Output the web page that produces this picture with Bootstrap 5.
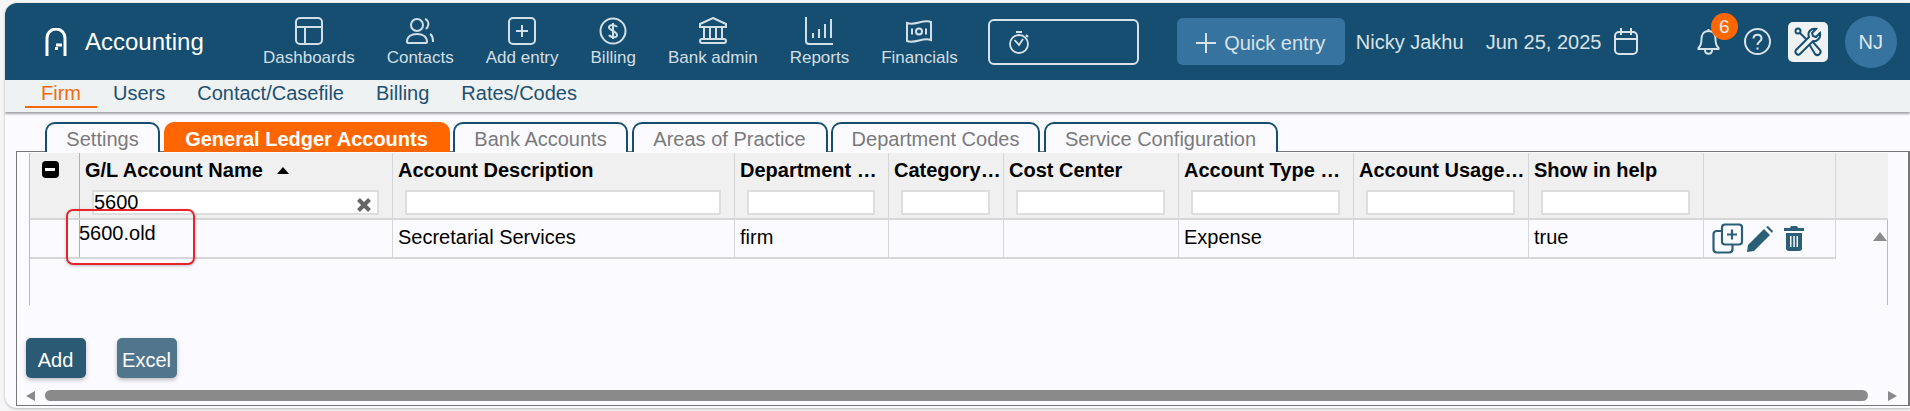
<!DOCTYPE html>
<html lang="en">
<head>
  <meta charset="UTF-8">
  <title>Accounting</title>
  <link href="https://cdn.jsdelivr.net/npm/bootstrap@5.3.2/dist/css/bootstrap.min.css" rel="stylesheet">
  <style>
    html, body { height: 411px; overflow: hidden; }
    body { background: #f6f6f6; font-family: "Liberation Sans", Arial, sans-serif; color: #000; }
    .app-shell { margin: 3px 0 0 5px; height: 405px; background: #fbfbff; border-radius: 12px 0 0 12px; box-shadow: 0 1px 3px rgba(0,0,0,.25); overflow: hidden; position: relative; }

    /* top bar */
    .top-bar { height: 77px; background: #154e70; color: #d8e2e8; }
    .brand-box { width: 222px; padding-left: 40px; gap: 18px; color: #fff; font-size: 24px; }
    .main-menu { gap: 32px; margin-left: 36px; }
    .menu-item { color: #d3dfe6; font-size: 17px; line-height: 18px; text-decoration: none; text-align: center; white-space: nowrap; }
    .menu-item svg { display: block; margin: 0 auto 4px; width: 30px; height: 28px; }
    .timer-box { width: 151px; height: 46px; margin-left: 30px; border: 2px solid #d8e2e8; border-radius: 6px; padding-left: 18px; }
    .quick-btn { width: 168px; height: 47px; margin-left: 38px; background: #37739f; border: 0; border-radius: 6px; color: #d8e2e8; font-size: 20px; padding: 3px 0 0; }
    .quick-btn:hover { background: #37739f; color: #d8e2e8; }
    .user-name { margin-left: 11px; font-size: 20px; width: 130px; }
    .date-text { font-size: 20px; width: 128px; }
    .bell-box { margin-left: 59px; width: 47px; position: relative; }
    .bell-count { position: absolute; left: 14px; top: -15px; width: 27px; height: 27px; border-radius: 50%; background: #ff6600; color: #e8eef2; font-size: 19px; line-height: 27px; text-align: center; }
    .tools-box { width: 40px; height: 40px; margin-left: 17px; background: #eef2f2; border-radius: 5px; }
    .avatar-box { width: 52px; height: 52px; margin-left: 17px; border-radius: 50%; background: #37739f; color: #dfe8ed; font-size: 20px; }

    /* second bar */
    .sub-bar { height: 32px; background: #eef2f2; box-shadow: 0 2px 2px rgba(0,0,0,.35); padding-left: 20px; position: relative; }
    .sub-link { color: #1e5070; font-size: 20px; line-height: 27px; padding: 0 16px; height: 28px; text-decoration: none; white-space: nowrap; }
    .sub-link.is-on { color: #f26a0f; border-bottom: 2px solid #f26a0f; }

    /* tabs */
    .tab-strip { gap: 3.5px; padding: 10px 0 0 40px; height: 39px; position: relative; z-index: 1; }
    .ledger-tab { height: 30px; border: 2px solid #154e70; border-bottom: 0; border-radius: 10px 10px 0 0; background: #fbfbff; color: #7a7a7a; font-size: 20px; line-height: 30px; text-align: center; white-space: nowrap; }
    .ledger-tab.is-on { background: #ff6600; border-color: #ff6600; color: #fff; font-weight: 700; }

    /* grid */
    .grid-frame { margin-left: 10.5px; height: 255px; border: 1px solid #777; border-right-width: 2px; padding: 1px 0 0 12px; }
    .grid-box { width: 1859px; height: 152px; border-left: 1px solid #bbb; border-right: 1px solid #bbb; }
    .ledger-grid { table-layout: fixed; width: 1858px; border-collapse: collapse; font-size: 20px; }
    .ledger-grid th { height: 66px; background: #f0f0f0; border-right: 1px solid #d6d6d6; border-bottom: 2px solid #d6d6d6; padding: 6px 2px 0 5px; vertical-align: top; font-size: 20px; line-height: 22px; white-space: nowrap; overflow: hidden; }
    .ledger-grid td { height: 39px; border-right: 1px solid #d6d6d6; border-bottom: 2px solid #d6d6d6; padding: 0 5px 4px; vertical-align: middle; white-space: nowrap; }
    .ledger-grid th.first-col { border-right-color: #b0b0b0; padding: 0 0 0 12px; }
    .ledger-grid td.first-col { border-right-color: #b0b0b0; padding: 0; }
    .ledger-grid td.name-col { padding: 0 0 4px; }
    .ledger-grid td.tools-col { padding: 0 5px; }
    .ledger-grid .filler-col { border-right: 0; border-bottom: 0; position: relative; padding: 0; }
    .ledger-grid th.filler-col { border-bottom: 2px solid #d6d6d6; }
    .name-cell { position: relative; top: -4px; left: -1px; }
    .filter-input { display: block; height: 25px; margin: 9px 0 0 7px; width: calc(100% - 18px); border: 2px solid #dedede; background: #fff; padding: 0; font-size: 20px; font-weight: 400; line-height: 21px; position: relative; }
    .filter-clear { position: absolute; right: 6px; top: 4px; line-height: 14px; }
    .sort-mark { margin-left: 14px; display: inline-block; border: 6px solid transparent; border-top: 0; border-bottom: 7px solid #000; vertical-align: 3px; }
    .minus-mark { display: inline-flex; width: 17px; height: 17px; background: #000; border-radius: 4px; align-items: center; justify-content: center; margin-top: 3px; }
    .minus-mark i { display: block; width: 10px; height: 3px; background: #fff; }
    .row-tools { gap: 3px; color: #2b5f78; padding-left: 3px; }
    .scroll-up { position: absolute; right: 1px; top: 12px; border: 7px solid transparent; border-top: 0; border-bottom: 9px solid #8a8a8a; }

    /* red note over the first row */
    .red-note { position: absolute; left: 61px; top: 206px; width: 129px; height: 56px; border: 2px solid #e8232a; border-radius: 7px; box-shadow: 0 1px 3px rgba(0,0,0,.25); pointer-events: none; }

    /* bottom */
    .action-row { gap: 31px; margin: 33px 0 0 -3px; }
    .grid-btn { width: 60px; height: 40px; padding: 3px 0 0; border: 0; border-radius: 5px; background: #2b5a74; color: #fff; font-size: 20px; box-shadow: 0 2px 4px rgba(0,0,0,.25); }
    .grid-btn.is-soft { background: #50758d; }
    .h-scroll { height: 11px; margin: 12px 0 0 -3px; gap: 10px; }
    .arrow-left { border: 5.5px solid transparent; border-left: 0; border-right: 9px solid #8a8a8a; }
    .arrow-right { border: 5.5px solid transparent; border-right: 0; border-left: 9px solid #8a8a8a; }
    .h-thumb { width: 1823px; height: 11px; background: #8a8a8a; border-radius: 6px; }
  </style>
</head>
<body>
  <div class="app-shell">
    <div class="top-bar d-flex align-items-center">
      <div class="brand-box d-flex align-items-center">
        <svg width="22" height="28" viewBox="0 0 22 28" fill="none" stroke="#fff" stroke-width="3"><path d="M2 28V10a9 9 0 0 1 18 0v18"/><path d="M11 17h6M11.500 19v3"/></svg>
        <span>Accounting</span>
      </div>
      <div class="main-menu d-flex">
        <a class="menu-item" href="#">
          <svg viewBox="0 0 30 28" fill="none" stroke="#d3dfe6" stroke-width="2"><rect x="2" y="1" width="26" height="26" rx="4"/><path d="M2 10h26M11 10v17"/></svg>Dashboards</a>
        <a class="menu-item" href="#">
          <svg viewBox="0 0 30 28" fill="none" stroke="#d3dfe6" stroke-width="2"><circle cx="12" cy="8" r="6"/><path d="M2 25c0-5 4-8 10-8s10 3 10 8c0 1-1 1-2 1H4c-1 0-2 0-2-1z"/><path d="M20 2c3 1 4 4 3 7-.4 1.200-1 2-2 3M25 17c2 1 3 4 3 8"/></svg>Contacts</a>
        <a class="menu-item" href="#">
          <svg viewBox="0 0 30 28" fill="none" stroke="#d3dfe6" stroke-width="2"><rect x="2" y="1" width="26" height="26" rx="4"/><path d="M15 8v12M9 14h12"/></svg>Add entry</a>
        <a class="menu-item" href="#">
          <svg viewBox="0 0 30 28" fill="none" stroke="#d3dfe6" stroke-width="2"><circle cx="15" cy="14" r="12.500"/><path d="M19 10c-1-2-7-3-8 0s8 4 8 8-7 2-8 0M15 6v16"/></svg>Billing</a>
        <a class="menu-item" href="#">
          <svg viewBox="0 0 30 28" fill="none" stroke="#d3dfe6" stroke-width="2"><path d="M15 1l13 6v3H2V7z"/><path d="M6 10v12M12 10v12M18 10v12M24 10v12"/><rect x="2" y="22" width="26" height="4" rx="2"/></svg>Bank admin</a>
        <a class="menu-item" href="#">
          <svg viewBox="0 0 30 28" fill="none" stroke="#d3dfe6" stroke-width="2"><path d="M2 0v24c0 2 1 3 3 3h24"/><path d="M9 21v-5M15 21v-9M21 21V7M27 21V2"/></svg>Reports</a>
        <a class="menu-item" href="#">
          <svg viewBox="0 0 30 28" fill="none" stroke="#d3dfe6" stroke-width="2"><path d="M3 6c8 3 16-4 24-1v18c-8-3-16 4-24 1z"/><circle cx="15" cy="14.500" r="3"/><path d="M8 11.500v6M22 11.500v6"/></svg>Financials</a>
      </div>
      <div class="timer-box d-flex align-items-center">
        <svg width="22" height="24" viewBox="0 0 22 24" fill="none" stroke="#d8e2e8" stroke-width="1.800"><circle cx="11" cy="14" r="9"/><path d="M8 2h6M18 5l2 2M6.500 10l4.500 5 4-6"/></svg>
      </div>
      <button class="quick-btn btn d-flex align-items-center justify-content-center gap-2" type="button">
        <svg width="20" height="20" viewBox="0 0 20 20" stroke="#d8e2e8" stroke-width="2"><path d="M10 0v20M0 10h20"/></svg>Quick entry</button>
      <div class="user-name">Nicky Jakhu</div>
      <div class="date-text">Jun 25, 2025</div>
      <svg width="24" height="27" viewBox="0 0 24 27" fill="none" stroke="#d8e2e8" stroke-width="2"><rect x="1" y="4" width="22" height="22" rx="4"/><path d="M1 11h22M7 0v7M17 0v7"/></svg>
      <div class="bell-box d-flex">
        <svg width="23" height="27" viewBox="0 0 23 27" fill="none" stroke="#d8e2e8" stroke-width="2"><path d="M11.500 3c-5 0-7 4-7 8 0 5-1 7-3 9v1h20v-1c-2-2-3-4-3-9 0-4-2-8-7-8zM11.500 1v2M8 22c0 5 7 5 7 0"/></svg>
        <span class="bell-count">6</span>
      </div>
      <svg width="27" height="27" viewBox="0 0 27 27" fill="none" stroke="#d8e2e8" stroke-width="2"><circle cx="13.500" cy="13.500" r="12.500"/><path d="M9.500 10.500c0-5 8-5 8 0 0 3-4 3-4 6.500M13.500 19.500v2"/></svg>
      <div class="tools-box d-flex align-items-center justify-content-center">
        <svg width="28" height="30" viewBox="0 0 28 30" fill="none" stroke="#154e70" stroke-width="2"><circle cx="4" cy="4" r="2.500"/><path d="M6 6l8 8"/><path d="M15 17l3-3 8 9c2 3-2 7-5 4z"/><path d="M26 6l-4 4-3-1-1-3 4-4c-5-1-9 3-7 8L2 23c-2 3 2 6 4 4l13-13c4 1 8-3 7-8z" fill="#eef2f2"/></svg>
      </div>
      <div class="avatar-box d-flex align-items-center justify-content-center">NJ</div>
    </div>

    <div class="sub-bar d-flex">
      <a class="sub-link is-on" href="#">Firm</a>
      <a class="sub-link" href="#">Users</a>
      <a class="sub-link" href="#">Contact/Casefile</a>
      <a class="sub-link" href="#">Billing</a>
      <a class="sub-link" href="#">Rates/Codes</a>
    </div>

    <div class="tab-strip d-flex">
      <div class="ledger-tab" style="width:115px">Settings</div>
      <div class="ledger-tab is-on" style="width:286px">General Ledger Accounts</div>
      <div class="ledger-tab" style="width:175px">Bank Accounts</div>
      <div class="ledger-tab" style="width:196px">Areas of Practice</div>
      <div class="ledger-tab" style="width:209px">Department Codes</div>
      <div class="ledger-tab" style="width:234px">Service Configuration</div>
    </div>

    <div class="grid-frame">
      <div class="grid-box">
        <table class="ledger-grid">
          <colgroup>
            <col style="width:50px"><col style="width:313px"><col style="width:342px"><col style="width:154px"><col style="width:115px"><col style="width:175px"><col style="width:175px"><col style="width:175px"><col style="width:175px"><col style="width:132px"><col>
          </colgroup>
          <thead>
            <tr>
              <th class="first-col"><span class="minus-mark"><i></i></span></th>
              <th>G/L Account Name<span class="sort-mark"></span>
                <div class="filter-input">5600<span class="filter-clear"><svg width="14" height="14" viewBox="0 0 14 14" stroke="#666" stroke-width="4"><path d="M1.500 1.500l11 11M12.500 1.500l-11 11"/></svg></span></div></th>
              <th>Account Description<div class="filter-input"></div></th>
              <th>Department …<div class="filter-input"></div></th>
              <th>Category…<div class="filter-input"></div></th>
              <th>Cost Center<div class="filter-input"></div></th>
              <th>Account Type …<div class="filter-input"></div></th>
              <th>Account Usage…<div class="filter-input"></div></th>
              <th>Show in help<div class="filter-input"></div></th>
              <th></th>
              <th class="filler-col"></th>
            </tr>
          </thead>
          <tbody>
            <tr>
              <td class="first-col"></td>
              <td class="name-col"><span class="name-cell">5600.old</span></td>
              <td>Secretarial Services</td>
              <td>firm</td>
              <td></td>
              <td></td>
              <td>Expense</td>
              <td></td>
              <td>true</td>
              <td class="tools-col">
                <div class="row-tools d-flex align-items-center">
                  <svg width="32" height="31" viewBox="0 0 32 31" fill="none" stroke="#2b5f78" stroke-width="2.200"><rect x="10" y="1.500" width="20" height="20" rx="3"/><path d="M20 6.500v10M15 11.500h10"/><path d="M10 8H5c-2 0-3.500 1.500-3.500 3.500V26c0 2 1.500 3.500 3.500 3.500h12c2 0 3.500-1.500 3.500-3.500v-4.500"/></svg>
                  <svg width="26" height="26" viewBox="0 0 26 26" fill="#2b5f78"><path d="M0 26l1-7L17 3l6 6L7 25zM19 1l2-1 5 5-1 2z"/></svg>
                  <svg width="20" height="25" viewBox="0 0 20 25" style="margin-left:8px" fill="#2b5f78"><path d="M7 0h6l1 2h6v3H0V2h6zM2 7h16v15c0 2-1 3-3 3H5c-2 0-3-1-3-3zM6 10v11h1.500V10zM9.300 10v11h1.500V10zM12.500 10v11H14V10z" fill-rule="evenodd"/></svg>
                </div>
              </td>
              <td class="filler-col"><span class="scroll-up"></span></td>
            </tr>
          </tbody>
        </table>
      </div>
      <div class="action-row d-flex">
        <button class="grid-btn btn" type="button">Add</button>
        <button class="grid-btn is-soft btn" type="button">Excel</button>
      </div>
      <div class="h-scroll d-flex align-items-center">
        <span class="arrow-left"></span>
        <span class="h-thumb"></span>
        <span class="arrow-right" style="margin-left:10px"></span>
      </div>
    </div>
    <div class="red-note"></div>
  </div>
  <script src="https://cdn.jsdelivr.net/npm/bootstrap@5.3.2/dist/js/bootstrap.bundle.min.js"></script>
</body>
</html>
